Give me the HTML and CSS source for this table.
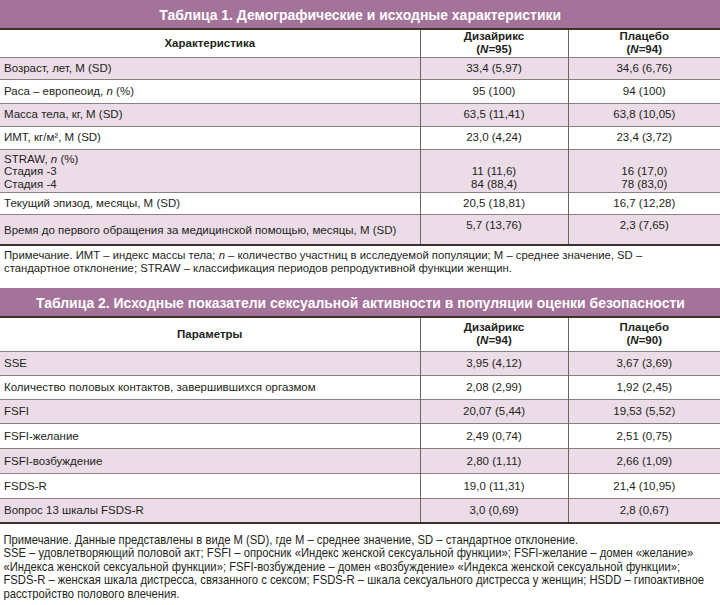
FILE: index.html
```html
<!DOCTYPE html>
<html lang="ru">
<head>
<meta charset="utf-8">
<title>Таблицы</title>
<link rel="stylesheet" href="styles.css">
</head>
<body>
<section class="block block-1">
  <div class="title"><span class="title-text">Таблица 1. Демографические и исходные характеристики</span></div>
  <table class="tbl t1">
    <colgroup><col class="c1"><col class="c2"><col class="c3"></colgroup>
    <thead>
      <tr class="head"><th>Характеристика</th><th>Дизайрикс<br>(<i>N</i>=95)</th><th>Плацебо<br>(<i>N</i>=94)</th></tr>
    </thead>
    <tbody>
      <tr class="pink r1"><td>Возраст, лет, M (SD)</td><td>33,4 (5,97)</td><td>34,6 (6,76)</td></tr>
      <tr class="r2"><td>Раса – европеоид, <i>n</i> (%)</td><td>95 (100)</td><td>94 (100)</td></tr>
      <tr class="pink r3"><td>Масса тела, кг, M (SD)</td><td>63,5 (11,41)</td><td>63,8 (10,05)</td></tr>
      <tr class="r4"><td>ИМТ, кг/м², M (SD)</td><td>23,0 (4,24)</td><td>23,4 (3,72)</td></tr>
      <tr class="pink straw"><td>STRAW, <i>n</i> (%)<br>Стадия -3<br>Стадия -4</td><td>11 (11,6)<br>84 (88,4)</td><td>16 (17,0)<br>78 (83,0)</td></tr>
      <tr class="r6"><td>Текущий эпизод, месяцы, M (SD)</td><td>20,5 (18,81)</td><td>16,7 (12,28)</td></tr>
      <tr class="pink time"><td>Время до первого обращения за медицинской помощью, месяцы, M (SD)</td><td>5,7 (13,76)</td><td>2,3 (7,65)</td></tr>
    </tbody>
  </table>
  <p class="note note-1">Примечание. ИМТ – индекс массы тела; <i>n</i> – количество участниц в исследуемой популяции; M – среднее значение, SD –<br>стандартное отклонение; STRAW – классификация периодов репродуктивной функции женщин.</p>
</section>

<section class="block block-2">
  <div class="title"><span class="title-text">Таблица 2. Исходные показатели сексуальной активности в популяции оценки безопасности</span></div>
  <table class="tbl t2">
    <colgroup><col class="c1"><col class="c2"><col class="c3"></colgroup>
    <thead>
      <tr class="head"><th>Параметры</th><th>Дизайрикс<br>(<i>N</i>=94)</th><th>Плацебо<br>(<i>N</i>=90)</th></tr>
    </thead>
    <tbody>
      <tr class="pink s1"><td>SSE</td><td>3,95 (4,12)</td><td>3,67 (3,69)</td></tr>
      <tr class="s2"><td>Количество половых контактов, завершившихся оргазмом</td><td>2,08 (2,99)</td><td>1,92 (2,45)</td></tr>
      <tr class="pink s3"><td>FSFI</td><td>20,07 (5,44)</td><td>19,53 (5,52)</td></tr>
      <tr class="s4"><td>FSFI-желание</td><td>2,49 (0,74)</td><td>2,51 (0,75)</td></tr>
      <tr class="pink s5"><td>FSFI-возбуждение</td><td>2,80 (1,11)</td><td>2,66 (1,09)</td></tr>
      <tr class="s6"><td>FSDS-R</td><td>19,0 (11,31)</td><td>21,4 (10,95)</td></tr>
      <tr class="pink s7"><td>Вопрос 13 шкалы FSDS-R</td><td>3,0 (0,69)</td><td>2,8 (0,67)</td></tr>
    </tbody>
  </table>
  <p class="note note-2">Примечание. Данные представлены в виде M (SD), где M – среднее значение, SD – стандартное отклонение.<br>SSE – удовлетворяющий половой акт; FSFI – опросник «Индекс женской сексуальной функции»; FSFI-желание – домен «желание»<br>«Индекса женской сексуальной функции»; FSFI-возбуждение – домен «возбуждение» «Индекса женской сексуальной функции»;<br>FSDS-R – женская шкала дистресса, связанного с сексом; FSDS-R – шкала сексуального дистресса у женщин; HSDD – гипоактивное<br>расстройство полового влечения.</p>
</section>
</body>
</html>
```

FILE: styles.css
```css
* { box-sizing: border-box; }
html { overflow: hidden; }
html, body { margin: 0; padding: 0; background: #ffffff; }
body {
  width: 720px;
  color: #231f20;
  font-family: "Liberation Sans", Arial, sans-serif;
  font-size: 11.5px;
}
.block { display: flex; flex-direction: column; }
.block-2 { margin-top: 13px; }

.title {
  background: #a47399;
  color: #ffffff;
  height: 28px;
  line-height: 29px;
  text-align: center;
  font-family: "Liberation Sans", Arial, sans-serif;
  font-weight: bold;
  font-size: 15.5px;
  white-space: nowrap;
}
.title-text {
  display: inline-block;
  transform: scaleX(0.9);
  transform-origin: 50% 50%;
}

.tbl {
  width: 720px;
  border-collapse: collapse;
  table-layout: fixed;
  border-top: 2px solid #3d312c;
  border-bottom: 2px solid #3d312c;
}
.c1 { width: 420px; }
.c2 { width: 148px; }
.c3 { width: 152px; }

.tbl th, .tbl td {
  padding: 0 4px;
  border-top: 1px solid #8b817c;
  border-left: 1px solid #6f6460;
  vertical-align: middle;
  line-height: 13px;
  font-weight: normal;
  white-space: nowrap;
}
.tbl th:first-child, .tbl td:first-child { border-left: none; text-align: left; }
.tbl th { text-align: center; font-weight: bold; }
.tbl td + td { text-align: center; }
.tbl thead th { border-top: none; }
.tbl .head th:first-child { text-align: center; }
.pink td { background: #ebdce7; }

.t1 .head th { height: 28px; }
.t1 .r1 td { height: 22px; }
.t1 .r2 td { height: 24px; }
.t1 .r3 td { height: 23px; }
.t1 .r4 td { height: 23px; }
.t1 .straw td { height: 42px; line-height: 12.5px; padding-bottom: 2px; vertical-align: bottom; }
.t1 .straw td:first-child { vertical-align: top; padding-top: 3px; }
.t1 .r6 td { height: 22px; }
.t1 .time td { height: 30px; vertical-align: top; padding-top: 4px; }
.t1 .time td:first-child { vertical-align: middle; padding-top: 2px; }

.t2 .head th { height: 35px; }
.t2 .s1 td { height: 24px; }
.t2 .s2 td { height: 24px; }
.t2 .s3 td { height: 24px; }
.t2 .s4 td { height: 25px; }
.t2 .s5 td { height: 25px; }
.t2 .s6 td { height: 25px; }
.t2 .s7 td { height: 24px; }

.note { margin: 0; padding: 4px 4px 0; white-space: nowrap; }
.note-1 { padding-top: 3px; line-height: 13px; font-size: 11.3px; }
.note-2 {
  width: 832px;
  padding-top: 9px;
  line-height: 13.5px;
  font-size: 13px;
  transform: scaleX(0.865);
  transform-origin: 0 0;
}
```
